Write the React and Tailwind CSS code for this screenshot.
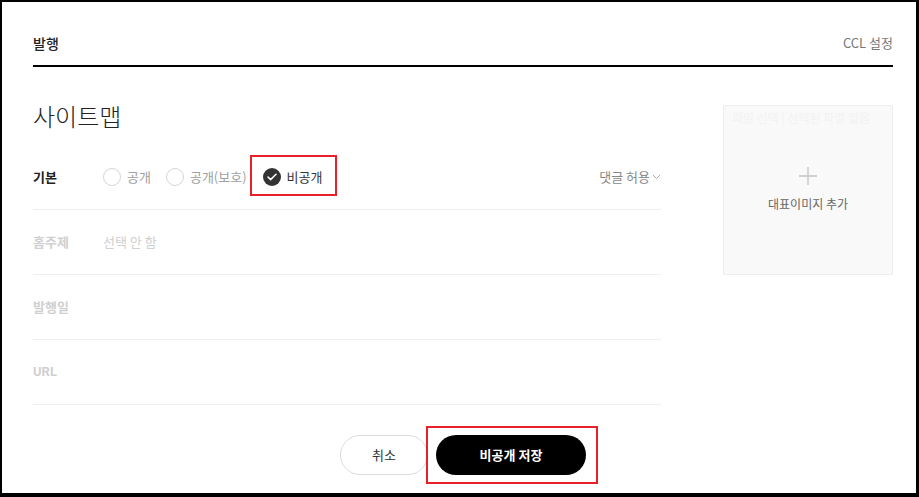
import React, { useState } from 'react'

const font = { fontFamily: '"Noto Sans CJK KR", "Noto Sans", sans-serif' }

function Radio({ label, checked, onClick }) {
  return (
    <button onClick={onClick} className="flex items-center gap-[6px]">
      {checked ? (
        <span className="w-[18px] h-[18px] rounded-full bg-[#333] flex items-center justify-center">
          <svg width="10" height="8" viewBox="0 0 10 8" fill="none">
            <path d="M1 4l2.6 2.6L9 1.2" stroke="#fff" strokeWidth="1.5" strokeLinecap="round" strokeLinejoin="round" />
          </svg>
        </span>
      ) : (
        <span className="w-[18px] h-[18px] rounded-full border border-[#d6d6d6] bg-white" />
      )}
      <span className={`text-[13px] leading-5 ${checked ? 'text-[#333]' : 'text-[#a0a0a0]'}`}>{label}</span>
    </button>
  )
}

export default function App() {
  const [visibility, setVisibility] = useState('private')

  return (
    <div style={font} className="w-[919px] h-[497px] bg-white border-l-2 border-t-2 border-r-[3px] border-b-4 border-black box-border overflow-hidden">
      <div className="pl-[31px] pr-[23px]">
        {/* 헤더 */}
        <div className="flex justify-between items-center pt-[31px] pb-[12px] border-b-2 border-black">
          <span className="text-[14px] leading-5 font-medium text-[#222]">발행</span>
          <span className="text-[13px] leading-5 text-[#777]">CCL 설정</span>
        </div>

        <div className="flex gap-[62px]">
          <div className="w-[628px]">
            <h1 className="mt-[33px] text-[24px] leading-8 font-light text-[#222]">사이트맵</h1>

            <div className="mt-[13px]">
              <div className="h-[65px] border-b border-[#eee] flex items-center">
                <span className="w-[70px] text-[13px] font-bold text-[#222]">기본</span>
                <div className="flex items-center gap-[15px]">
                  <Radio label="공개" checked={visibility === 'public'} onClick={() => setVisibility('public')} />
                  <Radio label="공개(보호)" checked={visibility === 'protected'} onClick={() => setVisibility('protected')} />
                  <div className="relative ml-[1px]">
                    <Radio label="비공개" checked={visibility === 'private'} onClick={() => setVisibility('private')} />
                    <span className="absolute left-[-13px] right-[-15px] top-[-12px] bottom-[-9px] border-2 border-[#e8202a] pointer-events-none" />
                  </div>
                </div>
                <span className="ml-auto flex items-center gap-[2px] text-[13px] text-[#888]">
                  댓글 허용
                  <svg width="9" height="6" viewBox="0 0 9 6" fill="none">
                    <path d="M1 1l3.5 3.5L8 1" stroke="#aaa" strokeWidth="1" />
                  </svg>
                </span>
              </div>

              <div className="h-[65px] border-b border-[#eee] flex items-center">
                <span className="w-[70px] text-[13px] font-bold text-[#d0d0d0]">홈주제</span>
                <span className="text-[13px] text-[#d0d0d0]">선택 안 함</span>
              </div>

              <div className="h-[65px] border-b border-[#eee] flex items-center">
                <span className="w-[70px] text-[13px] font-bold text-[#d0d0d0]">발행일</span>
              </div>

              <div className="h-[65px] border-b border-[#eee] flex items-center">
                <span className="w-[70px] text-[13px] font-bold text-[#d0d0d0]" style={{ fontFamily: 'Roboto, "Noto Sans CJK KR", sans-serif' }}>URL</span>
              </div>
            </div>
          </div>

          <div className="mt-[38px] w-[170px] h-[170px] bg-[#f9f9f9] border border-[#eee] relative flex flex-col items-center pt-[61px]">
            <span className="absolute top-[3px] left-[8px] text-[12px] text-[#f2f2f2] whitespace-nowrap">파일 선택 | 선택된 파일 없음</span>
            <svg width="18" height="18" viewBox="0 0 18 18">
              <path d="M9 0v18M0 9h18" stroke="#c4c4c4" strokeWidth="1.3" />
            </svg>
            <span className="mt-[10px] text-[12px] leading-[18px] text-[#666]">대표이미지 추가</span>
          </div>
        </div>

        {/* 버튼 */}
        <div className="mt-[30px] flex justify-center gap-[8px]">
          <button className="w-[88px] h-[40px] rounded-full border border-[#dcdcdc] text-[13px] text-[#333]">취소</button>
          <div className="relative">
            <button className="w-[150px] h-[40px] rounded-full bg-black text-white text-[13px] font-bold">비공개 저장</button>
            <span className="absolute left-[-10px] right-[-12px] top-[-9px] bottom-[-9px] border-2 border-[#e8202a] pointer-events-none" />
          </div>
        </div>
      </div>
    </div>
  )
}
